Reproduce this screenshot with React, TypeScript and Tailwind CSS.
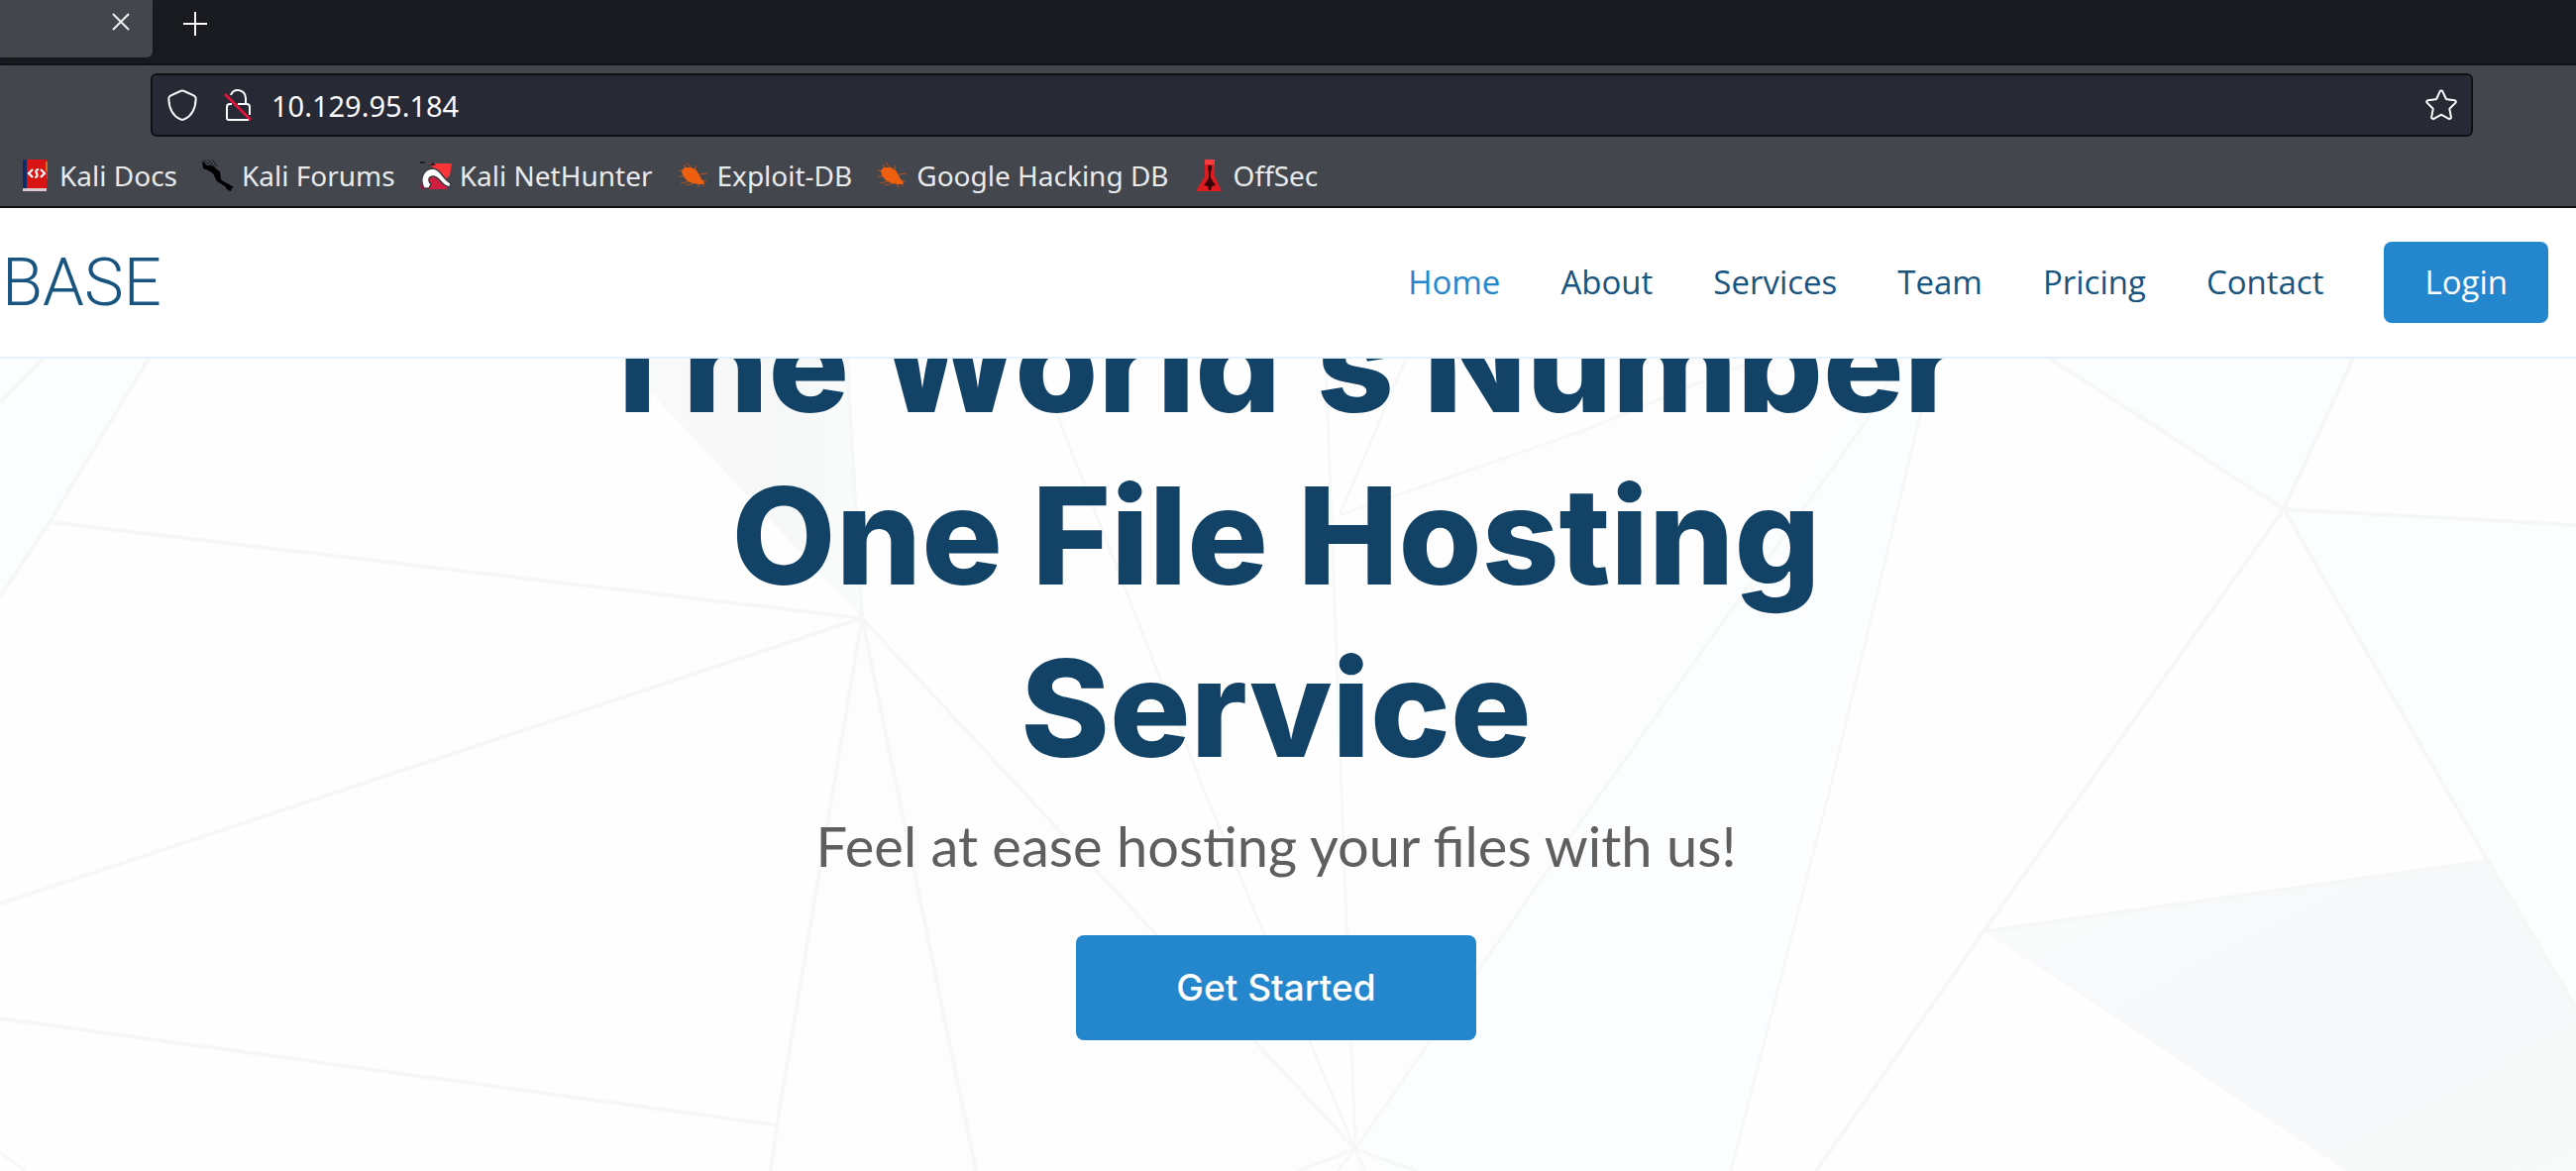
import type { ReactNode } from "react";

function DocsIcon() {
  return (
    <svg viewBox="0 0 32 32" className="size-8 shrink-0" aria-hidden="true">
      <rect x="3" y="0" width="4" height="30" fill="#0f2a66" />
      <rect x="7" y="0" width="20" height="30" fill="#d81414" />
      <path d="M26 2h2v10h-2z" fill="#e8641c" />
      <path d="M27 12h1v8h-1z" fill="#3d6fb0" />
      <rect x="3" y="29" width="24" height="3" fill="#d9c9cb" />
      <g fill="none" stroke="#fff" strokeWidth="2.2">
        <path d="M13 10l-4 4 4 4M21 10l4 4-4 4" />
        <path d="M19 10c-3 0-3 2-2 4s1 4-2 4" />
      </g>
    </svg>
  );
}

function ForumsIcon() {
  return (
    <svg viewBox="0 0 32 32" className="size-8 shrink-0" aria-hidden="true">
      <path d="M0 1l5 5 5 0 5 4 3 2 1 8 4 3 4 2 5 3-2 1-1 3-3-1-3-4-5-3-3-2-2-4-2-4-5-3-5-2z" fill="#000" />
      <g stroke="#17181d" strokeWidth="1" fill="none">
        <path d="M2 1l8 6M6 0l7 8M10 0l5 7" />
      </g>
    </svg>
  );
}

function NetHunterIcon() {
  return (
    <svg viewBox="0 0 32 32" className="size-8 shrink-0" aria-hidden="true">
      <path d="M9 4h23l-2 12-5 5z" fill="#fb3438" />
      <path d="M6 14l10 2 13 10-2 4H8z" fill="#d01f3e" />
      <path d="M0 2h5v2H0zM9 6l4-3 3 3z" fill="#1c1d22" />
      <path d="M4 29C-1 20 3 10 12 9c9 0 10 10 19 15l-1 4c-9-1-10-11-17-11-5 0-5 5-2 8l-2 4z" fill="#fff" stroke="#3a3a40" strokeWidth="1.5" />
      <path d="M0 24l5 6H1z" fill="#a3143c" />
    </svg>
  );
}

function ExploitIcon() {
  return (
    <svg viewBox="0 0 32 32" className="size-8 shrink-0" aria-hidden="true">
      <g fill="none" stroke="#ab5124" strokeWidth="1.2">
        <path d="M8 8L6 5M13 8L9 3M18 12V6M22 15l8-1M24 21l5 1M5 12l-4-1M6 17H1M12 22l-9 2M16 24l-8 2M20 24l2 4M25 24l2 3" />
      </g>
      <path d="M4 11l3-3 7 0 5 3 3 5 2 4 3 3-1 2-4 0-7-1-6-3-4-5z" fill="#ee600f" />
    </svg>
  );
}

function OffSecIcon() {
  return (
    <svg viewBox="0 0 32 32" className="size-8 shrink-0" aria-hidden="true">
      <path d="M11 0h10v17l7 15H2l9-15z" fill="#dc1c20" />
      <path d="M11 0h10v5H11z" fill="#fb3a3c" />
      <path d="M14 6h4v4l-1 2v6l2 4 3 4-4 1-1 4h-2l-1-4-4-1 3-4 2-4v-6l-1-2z" fill="#3a0509" />
    </svg>
  );
}

function ShieldIcon() {
  return (
    <svg viewBox="0 0 32 32" className="size-8 shrink-0" fill="none" stroke="#fbfbfe" strokeWidth="2" strokeLinejoin="round" aria-hidden="true">
      <path d="M16 1.500c1 0 2 .4 3 1l8.500 3.800c1.500.7 2.300 1.700 2.200 3.400C29.300 20 25.500 27 18 30.300c-1.400.6-2.600.6-4 0C6.500 27 2.700 20 2.300 9.700 2.200 8 3 7 4.500 6.300L13 2.500c1-.6 2-1 3-1z" />
    </svg>
  );
}

function InsecureLockIcon() {
  return (
    <svg viewBox="0 0 32 32" className="size-8 shrink-0" fill="none" strokeWidth="2" aria-hidden="true">
      <g stroke="#fbfbfe">
        <path d="M9 6c1-3 4-5 7-5 4.500 0 8 3.500 8 8v6" />
        <path d="M16 15h9c2 0 3 1 3 3v8" />
        <path d="M10 15H8c-2 0-3 1-3 3v11c0 1.500.5 2 2 2h20" />
      </g>
      <path d="M3 5l26 26" stroke="#e6143c" strokeWidth="2.500" />
    </svg>
  );
}

function StarIcon() {
  return (
    <svg viewBox="0 0 32 32" className="size-8" fill="none" stroke="#fbfbfe" strokeWidth="2" strokeLinejoin="round" aria-hidden="true">
      <path d="M14.600 2.300c.6-1.200 2.200-1.200 2.800 0l3.300 7.200c.2.400.5.700 1 .7l7.700 1c1.400.2 1.900 1.700.9 2.700l-5.500 5.300c-.3.300-.5.800-.4 1.200l1.500 7.700c.2 1.400-1.200 2.300-2.400 1.700l-6.700-3.700c-.5-.3-1-.3-1.500 0l-6.700 3.700c-1.200.6-2.600-.3-2.400-1.700l1.500-7.700c.1-.4-.1-.9-.4-1.200l-5.500-5.300c-1-1-.5-2.500.9-2.700l7.700-1c.4 0 .8-.3 1-.7z" />
    </svg>
  );
}

const bookmarks: { label: string; icon: ReactNode }[] = [
  { label: "Kali Docs", icon: <DocsIcon /> },
  { label: "Kali Forums", icon: <ForumsIcon /> },
  { label: "Kali NetHunter", icon: <NetHunterIcon /> },
  { label: "Exploit-DB", icon: <ExploitIcon /> },
  { label: "Google Hacking DB", icon: <ExploitIcon /> },
  { label: "OffSec", icon: <OffSecIcon /> },
];

const links = ["Home", "About", "Services", "Team", "Pricing", "Contact"];

function BrowserChrome() {
  return (
    <div className="shrink-0 bg-[#43464d] font-['Noto_Sans',sans-serif]">
      <div className="flex h-[66px] items-start border-b-2 border-[#111216] bg-[#1a1b20]">
        <div className="flex h-[58px] w-[154px] justify-end rounded-br-md bg-[#43464d] pr-[22px] shadow-md">
          <button type="button" aria-label="Close tab" className="mt-3 size-5">
            <svg viewBox="0 0 20 20" className="size-5" stroke="#f0f0f2" strokeWidth="2" aria-hidden="true">
              <path d="M2 2l16 16M18 2L2 18" />
            </svg>
          </button>
        </div>
        <button type="button" aria-label="New tab" className="mt-3 ml-[31px] size-6">
          <svg viewBox="0 0 24 24" className="size-6" stroke="#fbfbfe" strokeWidth="2" aria-hidden="true">
            <path d="M12 0v24M0 12h24" />
          </svg>
        </button>
      </div>
      <div className="pt-2 pr-[104px] pl-[152px]">
        <div className="flex h-16 items-center rounded-md border-2 border-[#0f1014] bg-[#272935] px-3.5">
          <ShieldIcon />
          <div className="ml-6 flex">
            <InsecureLockIcon />
          </div>
          <input
            type="text"
            aria-label="Address"
            defaultValue="10.129.95.184"
            className="ml-[18px] min-w-0 flex-1 bg-transparent pt-0.5 text-[29px] text-[#fbfbfe] outline-none"
          />
          <button type="button" aria-label="Bookmark this page">
            <StarIcon />
          </button>
        </div>
      </div>
      <nav aria-label="Bookmarks" className="flex h-[72px] items-center gap-[25px] border-b-2 border-[#0f1014] pt-2 pl-5">
        {bookmarks.map((b) => (
          <a key={b.label} href="#" className="flex items-center gap-2 text-[28px] leading-8 whitespace-nowrap text-[#e9eaec]">
            {b.icon}
            {b.label}
          </a>
        ))}
      </nav>
    </div>
  );
}

function SiteHeader() {
  return (
    <header className="z-10 flex h-[152px] shrink-0 items-center justify-between border-b-2 border-[#e5f1fa] bg-white pr-7 pl-0.5 font-['Open_Sans',sans-serif]">
      <a href="#" className="font-['Roboto',sans-serif] text-[67px] leading-none font-light text-[#185480]">
        BASE
      </a>
      <nav aria-label="Main" className="flex items-center gap-[61px] text-[33px] text-[#185480]">
        {links.map((l) => (
          <a key={l} href="#" className={l === "Home" ? "text-[#2487ce]" : ""}>
            {l}
          </a>
        ))}
        <a href="#" className="flex h-[82px] items-center rounded-lg bg-[#2487ce] px-[41px] text-white">
          Login
        </a>
      </nav>
    </header>
  );
}

function PolygonBackdrop() {
  return (
    <svg viewBox="0 362 2600 820" preserveAspectRatio="xMidYMid slice" className="absolute inset-0 size-full" aria-hidden="true">
      <defs>
        <linearGradient id="shard" x1="0" y1="0" x2="1" y2="0">
          <stop offset="0" stopColor="#fafafa" />
          <stop offset="0.7" stopColor="#f6f7f7" />
          <stop offset="1" stopColor="#fafbfb" />
        </linearGradient>
        <linearGradient id="slab" x1="0" y1="0" x2="1" y2="1">
          <stop offset="0" stopColor="#fafbfb" />
          <stop offset="0.5" stopColor="#f7f8fa" />
          <stop offset="1" stopColor="#f8f9f9" />
        </linearGradient>
      </defs>
      <rect x="0" y="362" width="2600" height="820" fill="#fefefe" />
      <path d="M0 362H150L0 603z" fill="#fcfdfe" />
      <path d="M870 624L1368 1160 1352 1182H985zM870 624L784 1136 778 1182H985z" fill="#fdfdfe" />
      <path d="M1352 520L1600 434 1759 362H1950L1747 1182H1368z" fill="#fdfdfd" />
      <path d="M1900 362H1952L1747 1182H1400L1368 1160z" fill="#fcfdfe" />
      <path d="M2069 362H2375L2305 514zM2305 514L2600 530V1017z" fill="#fcfdfe" />
      <path d="M625 362H855L870 624z" fill="url(#shard)" />
      <path d="M2003 940L2511 869 2600 1017V1182H2369z" fill="url(#slab)" />
      <g fill="none" stroke="#f6f8f8" strokeWidth="4">
        <path d="M43 362L0 407M150 362L50 527 0 603M50 527L870 624 0 912M0 1028L786 1136" />
        <path d="M870 624L784 1136 778 1182M870 624L985 1182M870 624L1368 1160M855 362L870 624" />
        <path d="M1045 362L1216 800 1368 1160" strokeWidth="3" />
        <path d="M1338 362L1354 800 1368 1160M1419 362L1352 520 1600 434 1775 362" strokeWidth="3" />
        <path d="M1920 362L1887 420 1600 823 1368 1160M1952 362L1846 800 1747 1182" strokeWidth="3" />
        <path d="M2069 362L2305 514 2375 362M2305 514L2600 530M2305 514L2511 869 2600 1017M2305 514L2003 939 1833 1182M2003 940L2511 869" />
        <path d="M1310 1182L1368 1160 1430 1182M1350 1182L1368 1160 1378 1182M0 1163L25 1182" strokeWidth="3" />
      </g>
    </svg>
  );
}

function Hero() {
  return (
    <main className="relative min-h-0 flex-1 overflow-hidden">
      <PolygonBackdrop />
      <div className="relative mx-auto -mt-[82px] flex max-w-[1440px] flex-col items-center pr-6 text-center">
        <h1 className="font-['Inter',sans-serif] text-[136px] leading-[174px] font-extrabold text-[#124265]">
          The World’s Number One File Hosting Service
        </h1>
        <p className="mt-[18px] font-['Lato',sans-serif] text-[56px] leading-[68px] text-[#5f5f5f]">
          Feel at ease hosting your files with us!
        </p>
        <a
          href="#"
          className="mt-14 flex h-[106px] w-[404px] items-center justify-center rounded-lg bg-[#2487ce] font-['Inter',sans-serif] text-[37px] font-medium text-white"
        >
          Get Started
        </a>
      </div>
    </main>
  );
}

export default function App() {
  return (
    <div className="flex h-screen flex-col overflow-hidden bg-white">
      <BrowserChrome />
      <SiteHeader />
      <Hero />
    </div>
  );
}
